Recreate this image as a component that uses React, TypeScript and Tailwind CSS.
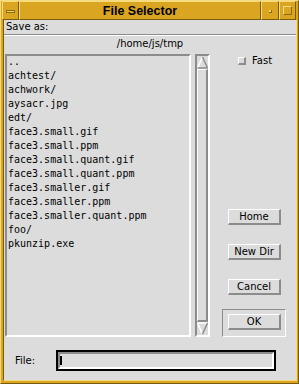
import React from "react";

const files = [
  "..",
  "achtest/",
  "achwork/",
  "aysacr.jpg",
  "edt/",
  "face3.small.gif",
  "face3.small.ppm",
  "face3.small.quant.gif",
  "face3.small.quant.ppm",
  "face3.smaller.gif",
  "face3.smaller.ppm",
  "face3.smaller.quant.ppm",
  "foo/",
  "pkunzip.exe",
];

function Btn({ label }: { label: string }) {
  return (
    <div className="w-[53px] h-[16px] border-t border-l border-t-white border-l-white border-b-2 border-r-2 border-b-[#8c8c8c] border-r-[#8c8c8c] flex items-center justify-center text-[10px] leading-[12px] text-black">
      {label}
    </div>
  );
}

export default function App() {
  return (
    <div className="w-[299px] h-[384px] bg-[#daa520] border border-t-[#f6da7e] border-l-[#f6da7e] border-r-[#7c5a0c] border-b-[#7c5a0c] flex flex-col font-['DejaVu_Sans',sans-serif] text-black select-none">
      {/* Title bar */}
      <div className="flex h-[19px] ml-[1px] mr-[2px]">
        <div className="w-[17px] h-full border border-t-[#f6da7e] border-l-[#f6da7e] border-r-[#7c5a0c] border-b-[#7c5a0c] flex items-center justify-center">
          <div className="w-[9px] h-[3px] bg-[#f3d36e] border border-[#8b6a12] mt-[2px]" />
        </div>
        <div className="w-[242px] h-full border border-t-[#f6da7e] border-l-[#f6da7e] border-r-[#7c5a0c] border-b-[#7c5a0c] flex items-center justify-center">
          <span className="font-['Liberation_Sans',Arial,sans-serif] font-bold text-[12.5px] leading-[14px] text-black">
            File Selector
          </span>
        </div>
        <div className="w-[18px] h-full border border-t-[#f6da7e] border-l-[#f6da7e] border-r-[#7c5a0c] border-b-[#7c5a0c] flex items-center justify-center">
          <div className="w-[3px] h-[3px] bg-[#f3d36e] border-b border-r border-[#8b6a12] mt-[2px]" />
        </div>
        <div className="w-[17px] h-full border border-t-[#f6da7e] border-l-[#f6da7e] border-r-[#7c5a0c] border-b-[#7c5a0c] flex items-center justify-center">
          <div className="w-[9px] h-[9px] border border-t-[#f6da7e] border-l-[#f6da7e] border-r-[#8b6a12] border-b-[#8b6a12]" />
        </div>
      </div>

      {/* Content */}
      <div className="flex-1 ml-[2px] mr-[1px] mb-[2px] bg-[#dcdcdc] border-l border-l-[#7c5a0c] border-r border-r-[#f6da7e] border-b border-b-[#f6da7e] flex flex-col">
        <div className="h-[14px] leading-[14px] text-[10px] pl-[2px]">Save as:</div>
        <div className="h-[1px] bg-[#8c8c8c]" />
        <div className="h-[1px] bg-white" />
        <div className="h-[18px] pt-[1px] text-[10px] leading-[14px] text-center">/home/js/tmp</div>

        {/* Main row */}
        <div className="h-[283px] flex">
          {/* List */}
          <div className="ml-[1px] w-[186px] h-full border-2 border-t-[#8c8c8c] border-l-[#8c8c8c] border-b-white border-r-white overflow-hidden">
            <div className="-mt-[1px] font-['DejaVu_Sans_Mono',monospace] text-[10px] leading-[14px] pl-[1px]">
              {files.map((f) => (
                <div key={f} className="h-[14px] whitespace-pre">
                  {f}
                </div>
              ))}
            </div>
          </div>

          {/* Scrollbar */}
          <div className="ml-[4px] w-[15px] h-full border-2 border-t-[#8c8c8c] border-l-[#8c8c8c] border-b-white border-r-white flex flex-col">
            <svg width="11" height="13" viewBox="0 0 11 13" className="block shrink-0">
              <polygon points="5.5,1 10.5,12 0.5,12" fill="#dcdcdc" />
              <line x1="5.5" y1="1" x2="0.5" y2="12" stroke="#ffffff" strokeWidth="1.5" />
              <line x1="5.5" y1="1" x2="10.5" y2="12" stroke="#8c8c8c" strokeWidth="1.5" />
              <line x1="0.5" y1="12" x2="10.5" y2="12" stroke="#8c8c8c" strokeWidth="1.5" />
            </svg>
            <div className="flex-1 border-t border-l border-t-white border-l-white border-r-2 border-b-2 border-r-[#8c8c8c] border-b-[#8c8c8c]" />
            <svg width="11" height="13" viewBox="0 0 11 13" className="block shrink-0">
              <polygon points="0.5,1 10.5,1 5.5,12" fill="#dcdcdc" />
              <line x1="0.5" y1="1" x2="10.5" y2="1" stroke="#ffffff" strokeWidth="1.5" />
              <line x1="0.5" y1="1" x2="5.5" y2="12" stroke="#ffffff" strokeWidth="1.5" />
              <line x1="10.5" y1="1" x2="5.5" y2="12" stroke="#8c8c8c" strokeWidth="1.5" />
            </svg>
          </div>

          {/* Right panel */}
          <div className="flex-1 flex flex-col">
            <div className="mt-[3px] h-[8px] flex items-center ml-[28px]">
              <div className="w-[8px] h-[8px] bg-[#dcdcdc] border-t border-l border-t-white border-l-white border-b-2 border-r-2 border-b-[#8c8c8c] border-r-[#8c8c8c]" />
              <span className="ml-[6px] text-[10px] leading-[10px]">Fast</span>
            </div>
            <div className="mt-[144px] ml-[18px]">
              <Btn label="Home" />
            </div>
            <div className="mt-[19px] ml-[18px]">
              <Btn label="New Dir" />
            </div>
            <div className="mt-[19px] ml-[18px]">
              <Btn label="Cancel" />
            </div>
            <div className="mt-[14px] ml-[12px] w-[64px] h-[29px] border border-t-[#8c8c8c] border-l-[#8c8c8c] border-b-white border-r-white pt-[4px] pl-[5px]">
              <Btn label="OK" />
            </div>
          </div>
        </div>

        {/* File input row */}
        <div className="flex-1 flex items-start pt-[13px]">
          <div className="w-[52px] pl-[11px] h-[21px] flex items-center text-[10px] leading-[12px]">File:</div>
          <div className="w-[220px] h-[21px] border-2 border-black">
            <div className="w-full h-full border-2 border-t-[#8c8c8c] border-l-[#8c8c8c] border-b-white border-r-white">
              <div className="mt-[2px] w-[2px] h-[9px] bg-black" />
            </div>
          </div>
        </div>
      </div>
    </div>
  );
}
